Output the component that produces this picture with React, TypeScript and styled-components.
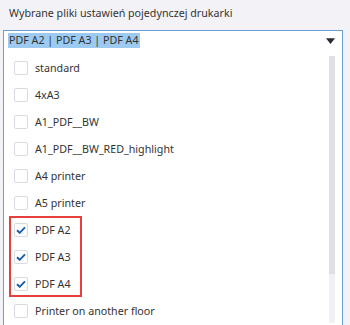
import React from "react";
import styled, { createGlobalStyle } from "styled-components";

const Global = createGlobalStyle`
  html, body { margin: 0; padding: 0; }
  body {
    background: #f3f3f7;
    font-family: "Noto Sans", "Open Sans", sans-serif;
    width: 350px;
    height: 325px;
    overflow: hidden;
  }
`;

const Page = styled.div`
  display: flex;
  flex-direction: column;
  padding: 0 0 0 3px;
  height: 325px;
  box-sizing: border-box;
`;

const Label = styled.div`
  font-size: 10.7px;
  color: #333;
  padding: 4px 0 0 6px;
  height: 30px;
  box-sizing: border-box;
  line-height: 18px;
`;

const Box = styled.div`
  flex: 1;
  width: 340px;
  box-sizing: border-box;
  display: flex;
  flex-direction: column;
  background: #fff;
  border: 1px solid #6a9fd4;
  border-bottom: none;
  min-height: 0;
`;

const Header = styled.div`
  display: flex;
  align-items: flex-start;
  justify-content: space-between;
  height: 23px;
  box-sizing: border-box;
  padding: 2px 7px 0 4px;
`;

const Selected = styled.span`
  background: #9ccaf0;
  color: #333;
  font-size: 10.7px;
  line-height: 15px;
  padding: 0 1px;
`;

const Arrow = styled.svg`
  width: 9px;
  height: 6px;
  margin-top: 5px;
`;

const Body = styled.div`
  flex: 1;
  display: flex;
  min-height: 0;
`;

const List = styled.div`
  flex: 1;
  display: flex;
  flex-direction: column;
  padding-left: 5px;
`;

const Group = styled.div`
  display: flex;
  flex-direction: column;
  width: 73px;
  outline: 2px solid #e5403b;
  outline-offset: -2px;
`;

const Row = styled.div`
  display: flex;
  align-items: center;
  height: 27px;
  padding-left: 5px;
  gap: 7px;
  font-size: 10.7px;
  color: #333;
  white-space: nowrap;
`;

const Check = styled.div`
  width: 14px;
  height: 14px;
  border: 1px solid #dadadf;
  border-radius: 2px;
  box-sizing: border-box;
  background: #fff;
  display: flex;
  align-items: center;
  justify-content: center;
  flex: none;
`;

const Track = styled.div`
  width: 6px;
  margin: 2px 7px 2px 0;
  background: #f1f1f5;
  display: flex;
  flex-direction: column;
`;

const Thumb = styled.div`
  background: #dfdfe4;
  height: 218px;
`;

const Tick = () => (
  <svg width="10" height="8" viewBox="0 0 10 8">
    <path d="M1 4.2 L3.7 6.8 L9 1.3" fill="none" stroke="#165ea9" strokeWidth="1.9" />
  </svg>
);

const items = [
  "standard",
  "4xA3",
  "A1_PDF__BW",
  "A1_PDF__BW_RED_highlight",
  "A4 printer",
  "A5 printer",
];

const checked = ["PDF A2", "PDF A3", "PDF A4"];

export default function App() {
  return (
    <>
      <Global />
      <Page>
        <Label>Wybrane pliki ustawień pojedynczej drukarki</Label>
        <Box>
          <Header>
            <Selected>PDF A2 | PDF A3 | PDF A4</Selected>
            <Arrow viewBox="0 0 9 6">
              <path d="M0 0.3 L9 0.3 L4.5 6 Z" fill="#2a2a36" />
            </Arrow>
          </Header>
          <Body>
            <List>
              {items.map((t) => (
                <Row key={t}>
                  <Check />
                  {t}
                </Row>
              ))}
              <Group>
                {checked.map((t) => (
                  <Row key={t}>
                    <Check>
                      <Tick />
                    </Check>
                    {t}
                  </Row>
                ))}
              </Group>
              <Row>
                <Check />
                Printer on another floor
              </Row>
            </List>
            <Track>
              <Thumb />
            </Track>
          </Body>
        </Box>
      </Page>
    </>
  );
}
